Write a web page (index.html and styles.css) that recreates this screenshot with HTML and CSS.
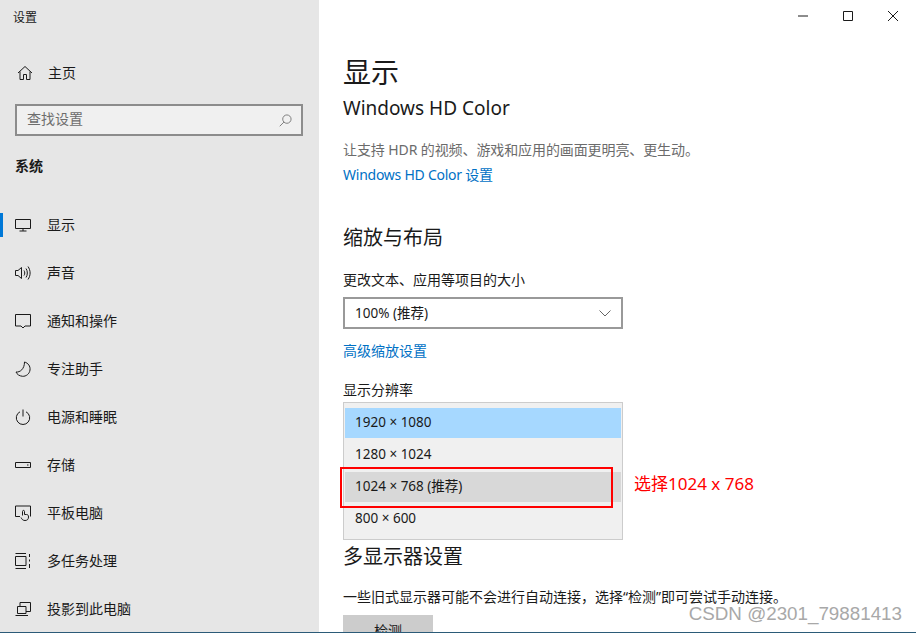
FILE: index.html
```html
<!DOCTYPE html>
<html lang="zh-CN">
<head>
    <meta charset="UTF-8">
    <meta name="viewport" content="width=device-width, initial-scale=1.0">
    <title>设置</title>
    <link rel="stylesheet" href="styles.css">
</head>
<body>
    <div class="window">
        <div class="sidebar">
            <div class="app-title">设置</div>
            <div class="home-row">
                <svg class="icon" viewBox="0 0 16 16"><path d="M1 8 8 1.5 15 8M3 6.5V14.500H6.500V9.500H9.500V14.500H13V6.500"/></svg>
                <span>主页</span>
            </div>
            <div class="search">
                <span>查找设置</span>
                <svg class="search-icon" viewBox="0 0 14 14"><circle cx="8.500" cy="5.500" r="4.500"/><path d="M5.300 8.700 .8 13.200"/></svg>
            </div>
            <div class="group-title">系统</div>
            <div class="nav">
                <div class="nav-item active">
                    <svg class="icon" viewBox="0 0 16 16"><path d="M.5 2.500H15.500V11.500H.5ZM8 11.500V14M4.500 14H11.500"/></svg>
                    <span>显示</span>
                </div>
                <div class="nav-item">
                    <svg class="icon" viewBox="0 0 16 16"><path d="M.5 5.500H3L6.500 2.500V13.500L3 10.500H.5ZM9 5.500C10 7 10 9 9 10.500M11 3.500C12.800 6 12.800 10 11 12.500M13 1.500C15.800 5.500 15.800 10.500 13 14.500"/></svg>
                    <span>声音</span>
                </div>
                <div class="nav-item">
                    <svg class="icon" viewBox="0 0 16 16"><path d="M.5 1.500H15.500V13H10L8 15 6 13H.5Z"/></svg>
                    <span>通知和操作</span>
                </div>
                <div class="nav-item">
                    <svg class="icon" viewBox="0 0 16 16"><path d="M9.500 1C13 2 15.500 5 15 9 14.500 13 11 15.500 7.500 15.300 4.500 15 2 13.500 1 11 5 11.500 9.500 8 9.500 1Z"/></svg>
                    <span>专注助手</span>
                </div>
                <div class="nav-item">
                    <svg class="icon" viewBox="0 0 16 16"><path d="M8 .5V7.500M5 2.800A6.700 6.700 0 1 0 11 2.800"/></svg>
                    <span>电源和睡眠</span>
                </div>
                <div class="nav-item">
                    <svg class="icon" viewBox="0 0 16 16"><path d="M.5 5.500H15.500V10.500H.5ZM12 8H13.500"/></svg>
                    <span>存储</span>
                </div>
                <div class="nav-item">
                    <svg class="icon" viewBox="0 0 16 16"><path d="M5 11.500H.5V1H15.500V11.500M7.500 10.500V6.500C7.500 5 9.500 5 9.500 6.500V9.500H11.500C13 9.500 13.500 10.500 13.500 12 13.500 14.500 12 15.500 10 15.500 8 15.500 7 14.500 6 12.500"/></svg>
                    <span>平板电脑</span>
                </div>
                <div class="nav-item">
                    <svg class="icon" viewBox="0 0 16 16"><path d="M.5 .5H11M.5 15.500H11M.5 3.500H11V12.500H.5ZM14.500 1V4M14.500 11V15M14.500 6.500V8.500"/></svg>
                    <span>多任务处理</span>
                </div>
                <div class="nav-item">
                    <svg class="icon" viewBox="0 0 16 16"><path d="M5 5.500V1.500H15.500V10.500H11M2.500 5.500H11V12.500H2.500ZM.5 14.500H13"/></svg>
                    <span>投影到此电脑</span>
                </div>
            </div>
        </div>

        <div class="content">
            <div class="caption-bar">
                <svg class="caption-icon" viewBox="0 0 10 10"><path d="M0 5H10"/></svg>
                <svg class="caption-icon" viewBox="0 0 10 10"><path d="M.5 .5H9.500V9.500H.5Z"/></svg>
                <svg class="caption-icon" viewBox="0 0 10 10"><path d="M0 0 10 10M10 0 0 10"/></svg>
            </div>
            <h1>显示</h1>
            <h2 class="hd-title">Windows HD Color</h2>
            <p class="hint">让支持 HDR 的视频、游戏和应用的画面更明亮、更生动。</p>
            <a class="link hd-link">Windows HD Color 设置</a>
            <h2 class="section">缩放与布局</h2>
            <div class="label">更改文本、应用等项目的大小</div>
            <div class="select">
                <span class="select-value">100% (推荐)</span>
                <svg class="chevron" viewBox="0 0 12 7"><path d="M.5 .5 6 6 11.500 .5"/></svg>
            </div>
            <a class="link scale-link">高级缩放设置</a>
            <div class="label res-label">显示分辨率</div>
            <div class="res-list">
                <div class="res-item selected">1920 × 1080</div>
                <div class="res-item">1280 × 1024</div>
                <div class="res-item hover">1024 × 768 (推荐)</div>
                <div class="res-item">800 × 600</div>
            </div>
            <h2 class="section multi">多显示器设置</h2>
            <p class="detect-text">一些旧式显示器可能不会进行自动连接，选择“检测”即可尝试手动连接。</p>
            <div class="detect-btn">检测</div>
        </div>

        <!-- annotation drawn on top of the screenshot -->
        <div class="mark-box"></div>
        <div class="mark-text">选择1024 x 768</div>
        <div class="watermark">CSDN @2301_79881413</div>
    </div>
</body>
</html>
```

FILE: styles.css
```css
* {
    box-sizing: border-box;
}

body {
    margin: 0;
    font-family: "Noto Sans", "Noto Sans CJK SC", sans-serif;
    font-size: 14px;
    color: #1a1a1a;
    background-color: #fff;
}

.window {
    position: relative;
    display: flex;
    width: 916px;
    height: 633px;
    overflow: hidden;
    border-bottom: 1px solid #2b5b78;
}

.sidebar {
    width: 319px;
    flex-shrink: 0;
    background-color: #e6e6e6;
}

.app-title {
    height: 32px;
    padding: 9px 0 0 13px;
    font-size: 12px;
    line-height: 18px;
}

.home-row {
    display: flex;
    align-items: center;
    gap: 15px;
    height: 48px;
    margin-top: 17px;
    padding-left: 17px;
}

.home-row span,
.nav-item span {
    line-height: 20px;
}

.icon {
    width: 16px;
    height: 16px;
    flex-shrink: 0;
    fill: none;
    stroke: #1a1a1a;
    stroke-width: 1;
}

.search {
    display: flex;
    align-items: center;
    justify-content: space-between;
    width: 288px;
    height: 32px;
    margin: 7px 0 0 15px;
    padding: 0 9px 4px 10px;
    background-color: #f0f0f0;
    border: 2px solid #8c8c8c;
    color: #6d6d6d;
}

.search-icon {
    width: 13px;
    height: 13px;
    margin-top: 4px;
    fill: none;
    stroke: #777;
    stroke-width: 1;
}

.group-title {
    margin: 20px 0 0 15px;
    font-weight: 700;
    line-height: 20px;
}

.nav {
    margin-top: 25px;
}

.nav-item {
    position: relative;
    display: flex;
    align-items: center;
    gap: 16px;
    height: 48px;
    padding-left: 15px;
}

.nav-item.active::before {
    content: "";
    position: absolute;
    left: 0;
    top: 12px;
    width: 3px;
    height: 24px;
    background-color: #0078d7;
}

.content {
    position: relative;
    flex: 1;
    padding-left: 24px;
}

.caption-bar {
    position: absolute;
    top: 0;
    right: 0;
    display: flex;
}

.caption-icon {
    width: 10px;
    height: 10px;
    margin: 11px 18px 0 17px;
    fill: none;
    stroke: #1a1a1a;
    stroke-width: 1;
}

h1 {
    margin: 53px 0 0;
    font-size: 28px;
    font-weight: 400;
    line-height: 38px;
}

h2 {
    margin: 0;
    font-weight: 400;
    font-size: 20px;
    line-height: 28px;
}

.hd-title {
    margin-top: 3px;
    font-size: 19px;
}

.hint {
    margin: 18px 0 0;
    color: #6b6b6b;
    line-height: 20px;
    letter-spacing: -0.1px;
}

.link {
    display: block;
    color: #0071c5;
    line-height: 20px;
}

.hd-link {
    margin-top: 5px;
    letter-spacing: -0.25px;
}

.section {
    margin-top: 39px;
}

.label {
    margin-top: 18px;
    line-height: 20px;
}

.select {
    display: flex;
    align-items: center;
    justify-content: space-between;
    width: 280px;
    height: 32px;
    margin-top: 7px;
    padding: 0 10px;
    border: 2px solid #999;
    font-size: 13.500px;
}

.select-value {
    margin-bottom: 2px;
}

.chevron {
    width: 12px;
    height: 7px;
    fill: none;
    stroke: #666;
    stroke-width: 1;
}

.scale-link {
    margin-top: 12px;
}

.res-label {
    margin-top: 19px;
}

.res-list {
    width: 280px;
    height: 138px;
    margin-top: 2px;
    padding: 5px 1px 0;
    background-color: #f0f0f0;
    border: 1px solid #ccc;
    font-size: 13.500px;
}

.res-item {
    height: 30px;
    margin-bottom: 2px;
    padding-left: 10px;
    line-height: 28px;
}

.res-item.selected {
    background-color: #a6d8ff;
}

.res-item.hover {
    background-color: #d8d8d8;
}

.multi {
    margin-top: 3px;
}

.detect-text {
    margin: 16px 0 0;
    line-height: 20px;
}

.detect-btn {
    width: 90px;
    height: 32px;
    margin-top: 8px;
    background-color: #ccc;
    text-align: center;
    line-height: 32px;
}

.mark-box {
    position: absolute;
    left: 340px;
    top: 467px;
    width: 273px;
    height: 41px;
    border: 2px solid #f00;
}

.mark-text {
    position: absolute;
    left: 634px;
    top: 472px;
    color: #f00;
    font-size: 17px;
    line-height: 24px;
}

.watermark {
    position: absolute;
    right: 14px;
    top: 604px;
    color: #a8a8a8;
    font-family: "Liberation Sans", sans-serif;
    font-size: 18.800px;
    line-height: 20px;
}
```
